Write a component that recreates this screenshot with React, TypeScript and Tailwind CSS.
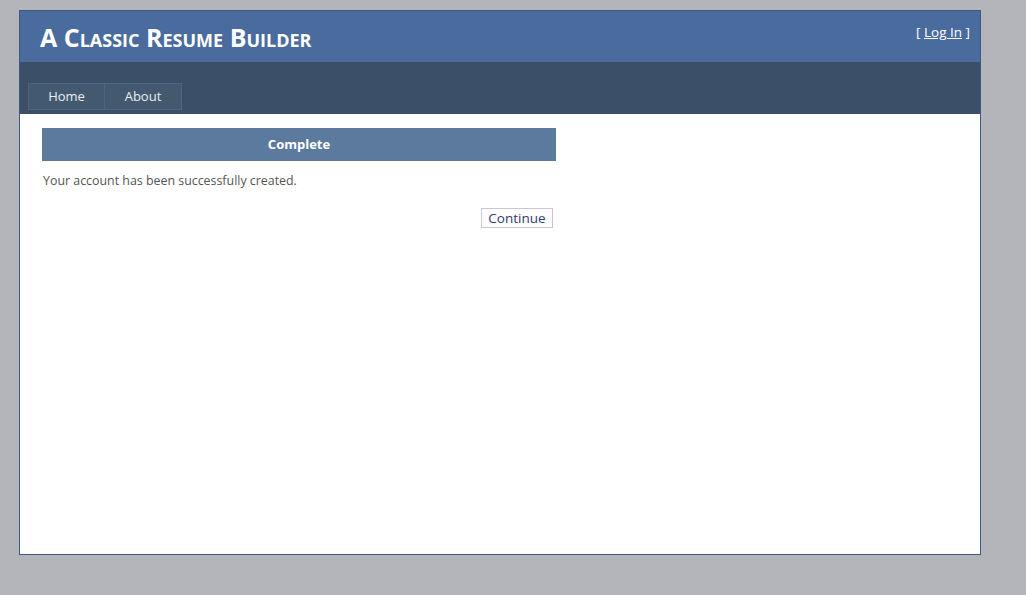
import React from "react";

export default function App() {
  return (
    <div className="min-h-[595px] w-full bg-[#b4b5ba] pt-[10px] pl-[19px]" style={{ fontFamily: "'Open Sans', 'DejaVu Sans', sans-serif" }}>
      <div className="w-[962px] h-[545px] border border-[#3f5a7e] bg-white flex flex-col">
        <div className="h-[51px] bg-[#4a6b9e] flex items-start justify-between">
          <h1 className="pl-[20px] pt-[11px] text-[25px] leading-[30px] font-bold text-white [font-variant:small-caps] tracking-[0px]" style={{ fontFamily: "'Open Sans', sans-serif" }}>
            A Classic Resume Builder
          </h1>
          <div className="pt-[11px] pr-[10px] text-[13.5px] leading-[20px] text-white">
            [ <a className="underline" href="#">Log In</a> ]
          </div>
        </div>
        <div className="h-[52px] bg-[#3b5068] flex items-end pl-[8px] pb-[4px]">
          <div className="flex">
            <div className="w-[77px] h-[27px] bg-[#43596f] border border-[#4d6680] flex items-center justify-center pt-[1px] text-[13px] text-[#e8eef6]">Home</div>
            <div className="w-[77px] h-[27px] bg-[#43596f] border border-l-0 border-[#4d6680] flex items-center justify-center pt-[1px] text-[13px] text-[#e8eef6]">About</div>
          </div>
        </div>
        <div className="pl-[22px] pt-[14px]">
          <div className="w-[514px]">
            <div className="h-[33px] bg-[#5b7a9e] flex items-center justify-center text-[13px] font-bold text-white">Complete</div>
            <p className="mt-[11px] pl-[1px] text-[12.4px] text-[#555]">Your account has been successfully created.</p>
            <div className="flex justify-end mt-[17px] pr-[3px]">
              <button className="w-[72px] h-[20px] border border-[#c8c8d0] bg-[#fffcff] text-[13.5px] leading-[18px] text-[#2a3f70]">Continue</button>
            </div>
          </div>
        </div>
      </div>
    </div>
  );
}
